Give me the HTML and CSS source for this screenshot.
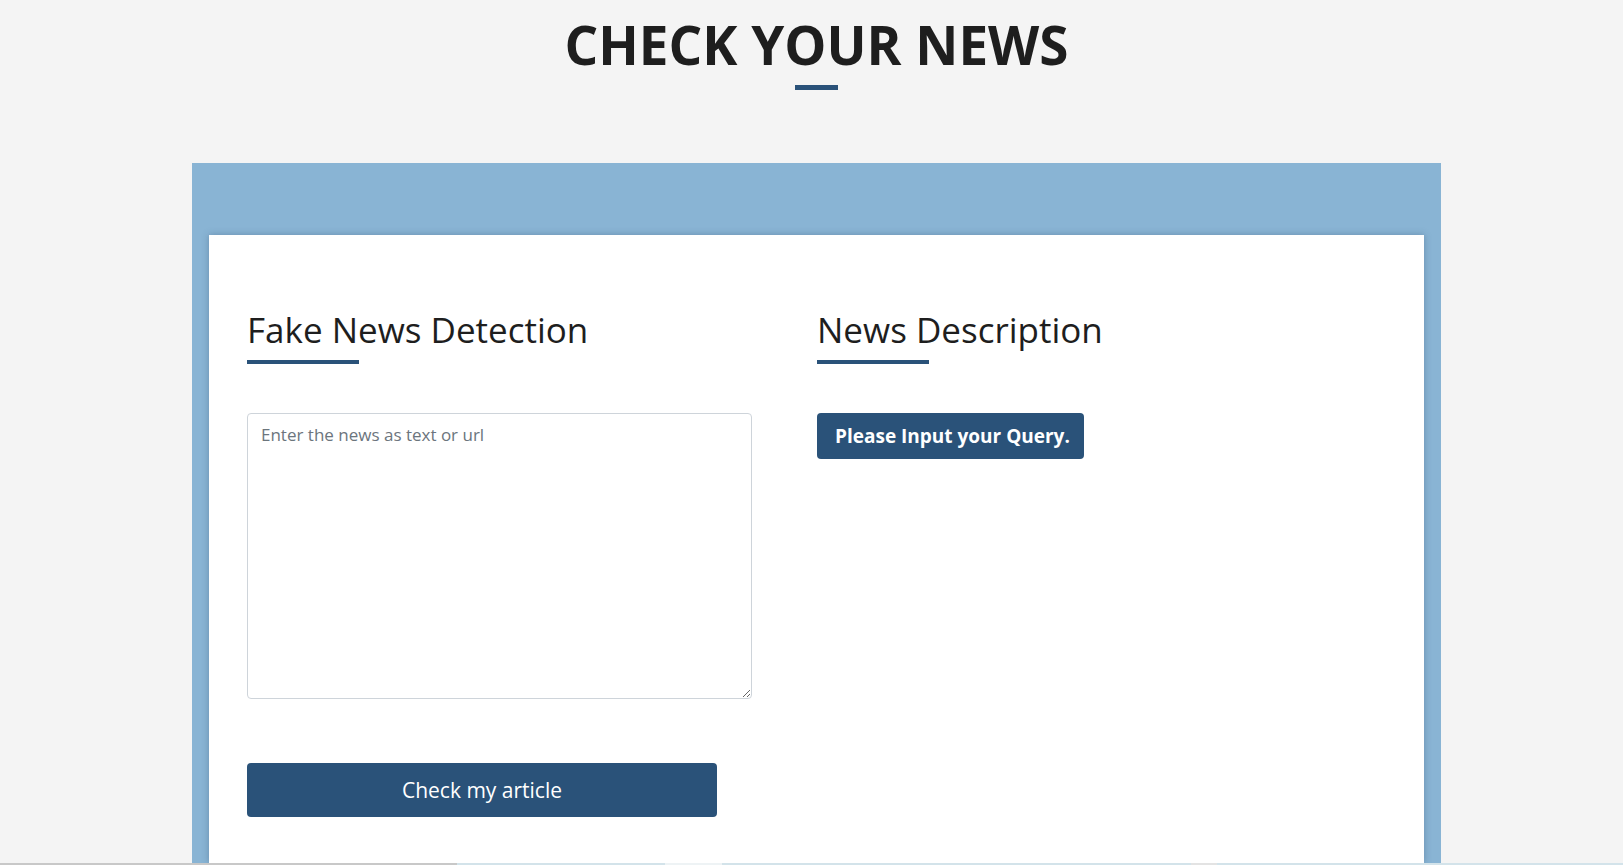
FILE: index.html
```html
<!DOCTYPE html>
<html lang="en">
<head>
<meta charset="utf-8">
<title>Check your news</title>
<link rel="stylesheet" href="styles.css">
</head>
<body>
<header class="page-head">
  <h1 class="page-title">CHECK YOUR NEWS</h1>
  <div class="title-bar"></div>
</header>
<section class="panel">
  <div class="card">
    <div class="col col-left">
      <h2 class="col-title">Fake News Detection</h2>
      <div class="col-bar"></div>
      <textarea class="news-input" placeholder="Enter the news as text or url"></textarea>
      <button class="btn-check" type="button">Check my article</button>
    </div>
    <div class="col col-right">
      <h2 class="col-title">News Description</h2>
      <div class="col-bar"></div>
      <div class="result-badge">Please Input your Query.</div>
    </div>
  </div>
</section>
<section class="next-section"></section>
</body>
</html>
```

FILE: styles.css
```css
html, body {
  margin: 0;
  padding: 0;
}
body {
  background: #f4f4f4;
  font-family: "Open Sans", "Noto Sans", Arial, sans-serif;
  color: #212121;
}
.page-head {
  display: flex;
  flex-direction: column;
  align-items: center;
  padding-top: 12px;
  padding-left: 10px;
}
.page-title {
  margin: 0;
  font-size: 53px;
  line-height: 66px;
  font-weight: 700;
  color: #1e1e1e;
  letter-spacing: 0;
}
.title-bar {
  width: 43px;
  height: 5px;
  background: #2a5279;
  margin-top: 7px;
}
.panel {
  width: 1249px;
  margin: 73px 0 0 192px;
  background: #89b4d4;
  padding: 72px 17px 0 17px;
  box-sizing: border-box;
  height: 700px;
}
.card {
  background: #fff;
  height: 628px;
  box-shadow: 0 0 7px rgba(40, 70, 100, 0.35);
  display: flex;
  padding: 75px 0 0 38px;
  box-sizing: border-box;
}
.col {
  display: flex;
  flex-direction: column;
  align-items: flex-start;
}
.col-left {
  width: 570px;
}
.col-title {
  margin: 0;
  font-size: 35px;
  line-height: 40px;
  font-weight: 400;
  color: #1e1e1e;
}
.col-bar {
  width: 112px;
  height: 4px;
  background: #2a5279;
  margin-top: 10px;
}
.news-input {
  margin-top: 49px;
  width: 505px;
  height: 286px;
  box-sizing: border-box;
  border: 1px solid #ced4da;
  border-radius: 4px;
  padding: 9px 13px;
  font-family: "Open Sans", "Noto Sans", Arial, sans-serif;
  font-size: 17px;
  line-height: 24px;
  color: #495057;
}
.news-input::placeholder {
  color: #6c757d;
}
.btn-check {
  margin-top: 64px;
  width: 470px;
  height: 54px;
  background: #2a5279;
  color: #fff;
  border: none;
  border-radius: 4px;
  font-family: "Open Sans", "Noto Sans", Arial, sans-serif;
  font-size: 21px;
  font-weight: 400;
}
.result-badge {
  margin-top: 49px;
  height: 46px;
  box-sizing: border-box;
  padding: 0 14px 0 18px;
  display: flex;
  align-items: center;
  background: #2a5279;
  color: #fff;
  border-radius: 4px;
  font-size: 19px;
  font-weight: 700;
}
.next-section {
  height: 200px;
  background: linear-gradient(to right,
    #c8c8c8 0, #c8c8c8 457px,
    #d3e3ea 457px, #d3e3ea 665px,
    #eef3f5 665px, #eef3f5 722px,
    #d3e3ea 722px, #d3e3ea 1191px,
    #e3e3e3 1191px, #e3e3e3 1217px,
    #d3e3ea 1217px, #d3e3ea 100%);
}
```
